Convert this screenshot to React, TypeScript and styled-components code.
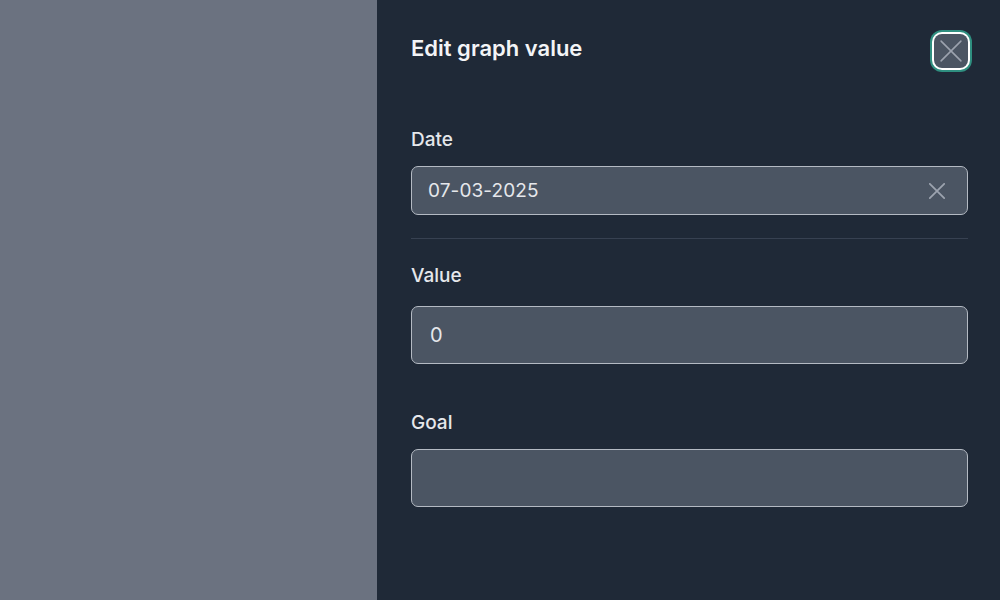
import React from "react";
import styled, { createGlobalStyle } from "styled-components";

const GlobalStyle = createGlobalStyle`
  html, body {
    margin: 0;
    padding: 0;
    height: 100%;
  }
  body {
    font-family: Inter, "Noto Sans", sans-serif;
    background: #6b7280;
  }
  #root {
    height: 100%;
  }
`;

const Screen = styled.div`
  display: flex;
  height: 100vh;
  width: 100%;
`;

const Backdrop = styled.div`
  flex: 0 0 377px;
  background: #6b7280;
`;

const Drawer = styled.aside`
  flex: 1;
  background: #1f2937;
  padding: 34px 32px 0 34px;
  display: flex;
  flex-direction: column;
`;

const Header = styled.div`
  display: flex;
  align-items: flex-start;
  justify-content: space-between;
  height: 28px;
`;

const Title = styled.h2`
  margin: 0;
  font-size: 22px;
  line-height: 28px;
  font-weight: 600;
  color: #f3f4f6;
`;

const CloseButton = styled.button`
  width: 34px;
  height: 34px;
  padding: 0;
  border: none;
  border-radius: 8px;
  background: #4b5563;
  display: flex;
  align-items: center;
  justify-content: center;
  box-shadow: 0 0 0 2px #ffffff, 0 0 0 4px #2f8f80;
  cursor: pointer;
`;

const Field = styled.div<{ $top: number }>`
  display: flex;
  flex-direction: column;
  margin-top: ${(p) => p.$top}px;
`;

const Label = styled.label<{ $gap: number }>`
  font-size: 19px;
  line-height: 24px;
  font-weight: 500;
  color: #e5e7eb;
  margin-bottom: ${(p) => p.$gap}px;
`;

const InputBox = styled.div<{ $height: number }>`
  box-sizing: border-box;
  height: ${(p) => p.$height}px;
  border: 1.5px solid #b4bac3;
  border-radius: 7px;
  background: #4b5563;
  display: flex;
  align-items: center;
  padding: 0 21px 0 16px;
`;

const InputText = styled.span<{ $size: number; $indent?: number }>`
  flex: 1;
  font-size: ${(p) => p.$size}px;
  padding-left: ${(p) => p.$indent ?? 0}px;
  color: #e5e7eb;
  letter-spacing: 0.1px;
`;

const ClearButton = styled.span`
  display: flex;
  align-items: center;
  justify-content: center;
  width: 18px;
  height: 18px;
`;

const Divider = styled.hr`
  border: none;
  border-top: 1px solid #374151;
  margin: 23px 0 0 0;
`;

const CrossIcon = ({ size, stroke }: { size: number; stroke: number }) => (
  <svg width={size} height={size} viewBox="0 0 20 20" fill="none">
    <path
      d="M1 1L19 19M19 1L1 19"
      stroke="#9ca3af"
      strokeWidth={stroke}
      strokeLinecap="round"
    />
  </svg>
);

const App = () => (
  <>
    <GlobalStyle />
    <Screen>
      <Backdrop />
      <Drawer>
        <Header>
          <Title>Edit graph value</Title>
          <CloseButton aria-label="Close">
            <CrossIcon size={22} stroke={1.4} />
          </CloseButton>
        </Header>

        <Field $top={66}>
          <Label $gap={14}>Date</Label>
          <InputBox $height={49}>
            <InputText $size={19}>07-03-2025</InputText>
            <ClearButton>
              <CrossIcon size={16} stroke={2.2} />
            </ClearButton>
          </InputBox>
        </Field>

        <Divider />

        <Field $top={25}>
          <Label $gap={18}>Value</Label>
          <InputBox $height={58}>
            <InputText $size={20} $indent={2}>0</InputText>
          </InputBox>
        </Field>

        <Field $top={47}>
          <Label $gap={14}>Goal</Label>
          <InputBox $height={58} />
        </Field>
      </Drawer>
    </Screen>
  </>
);

export default App;
